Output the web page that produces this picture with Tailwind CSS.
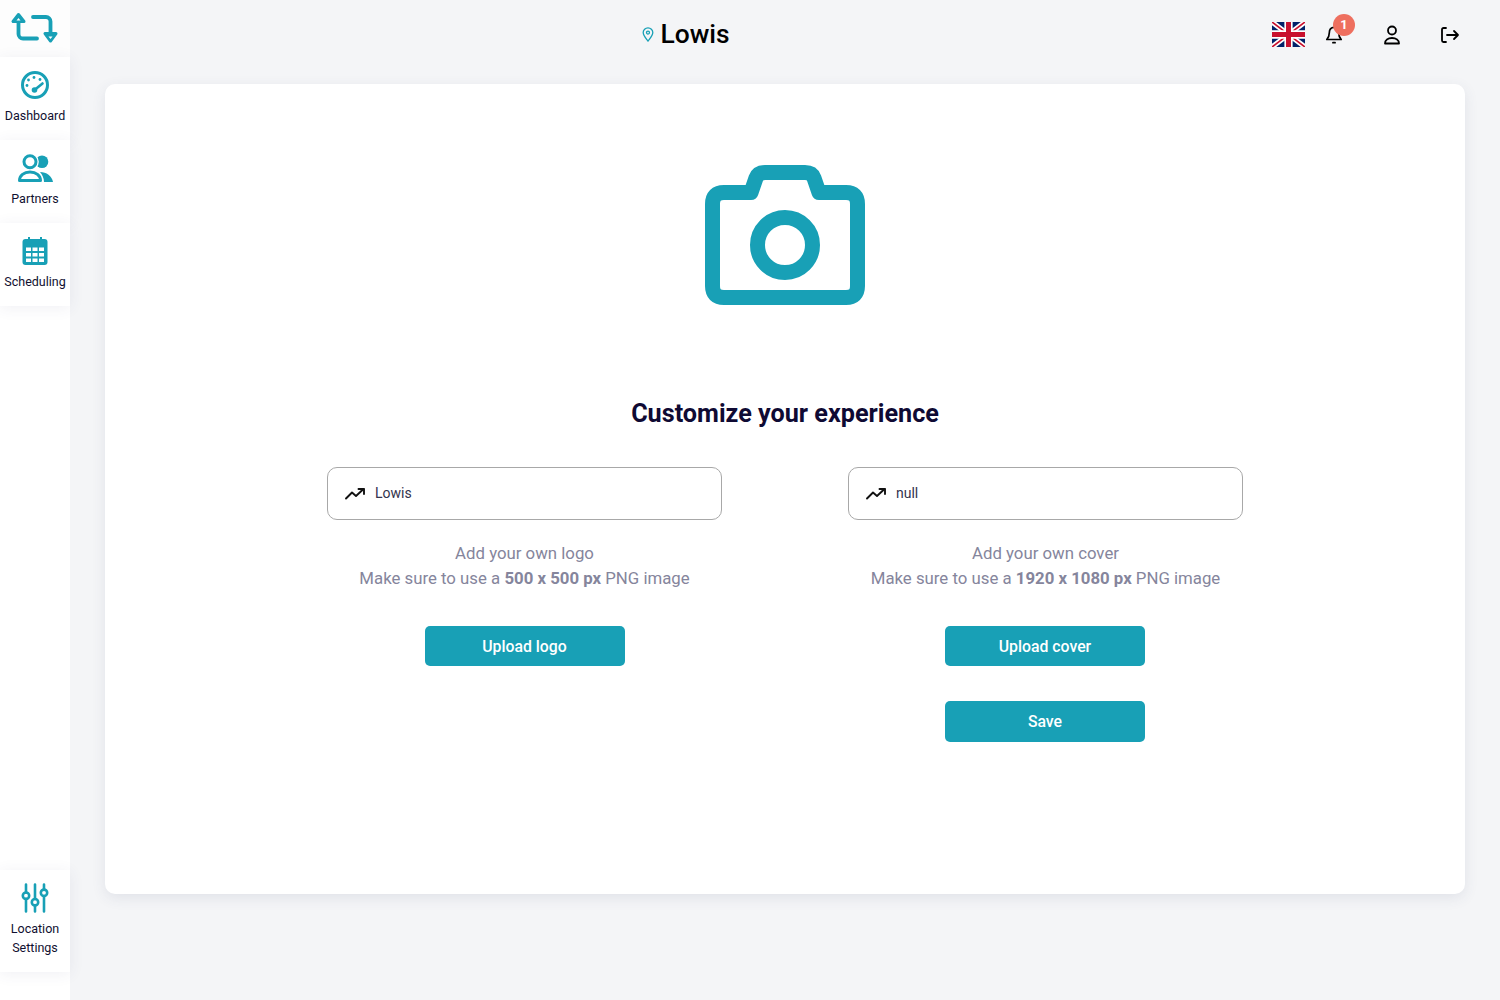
<!DOCTYPE html>
<html lang="en">
<head>
  <meta charset="UTF-8">
  <title>Lowis - Customize</title>
  <script src="https://cdn.jsdelivr.net/npm/@tailwindcss/browser@4"></script>
</head>
<body class="bg-[#f4f5f7] font-['Roboto',sans-serif] text-black">
  <div class="flex h-[1000px] w-[1500px] overflow-hidden">
    <!-- Sidebar -->
    <aside class="z-10 flex w-[70px] shrink-0 flex-col bg-white">
      <div class="flex h-[57px] items-start bg-[#fdfdfd] pt-[12px] pl-[10px]">
        <svg class="h-[32px] w-[48px]" viewBox="0 0 48 32" fill="none" stroke="#18a0b6" stroke-width="3.8" stroke-linecap="round" stroke-linejoin="round">
          <path d="M8.5 10v12a4.5 4.5 0 0 0 4.5 4.5h14"/>
          <path d="M8.5 2.5 3 9.500h11z" fill="#18a0b6" stroke-width="3"/>
          <path d="M8.500 6 6.500 8.500h4z" fill="#fff" stroke="none"/>
          <path d="M23 5h13a4.500 4.500 0 0 1 4.500 4.500V21"/>
          <path d="M35 21.500h11l-5.500 7.500z" fill="#18a0b6" stroke-width="3"/>
          <path d="M38.500 24.500h4l-2 2.500z" fill="#fff" stroke="none"/>
        </svg>
      </div>

      <a class="flex h-[83px] flex-col items-center bg-white pt-[13px] shadow-[0_2px_14px_rgba(60,70,110,0.08)]">
        <svg class="h-[30px] w-[30px]" viewBox="0 0 30 30" fill="none" stroke="#18a0b6">
          <circle cx="15" cy="15" r="12.5" stroke-width="3"/>
          <path d="M14.5 20 22.5 13.5" stroke-width="2.6" stroke-linecap="round"/>
          <circle cx="14.5" cy="20" r="2.8" fill="#18a0b6" stroke="none"/>
          <g fill="#18a0b6" stroke="none">
            <circle cx="7" cy="15.5" r="1.4"/><circle cx="8.5" cy="10" r="1.4"/><circle cx="14" cy="7.5" r="1.4"/><circle cx="20" cy="9.5" r="1.4"/>
          </g>
        </svg>
        <span class="mt-[8px] text-[12.5px] leading-[16px] text-[#101030]">Dashboard</span>
      </a>

      <a class="flex h-[83px] flex-col items-center bg-white pt-[13px] shadow-[0_2px_14px_rgba(60,70,110,0.08)]">
        <svg class="h-[30px] w-[36px]" viewBox="0 0 36 30" fill="none" stroke="#18a0b6" stroke-width="3">
          <circle cx="25" cy="8.7" r="6.3" fill="#18a0b6" stroke="none"/>
          <circle cx="13" cy="8.7" r="8.8" fill="#fff" stroke="none"/>
          <circle cx="13" cy="8.7" r="6"/>
          <path d="M23 19c6.5 0 12 4 13 10H27c0-4-1.5-7-4-10z" fill="#18a0b6" stroke="none"/>
          <path d="M2.5 27.5c0-5 4.5-8.5 10.500-8.500s10.500 3.500 10.500 8.500z" fill="#fff" stroke-linejoin="round"/>
        </svg>
        <span class="mt-[8px] text-[12.5px] leading-[16px] text-[#101030]">Partners</span>
      </a>

      <a class="flex h-[83px] flex-col items-center bg-white pt-[13px] shadow-[0_2px_14px_rgba(60,70,110,0.08)]">
        <svg class="h-[30px] w-[30px]" viewBox="0 0 30 30">
          <path d="M8 1h2v4H8zM20 1h2v4h-2z" fill="#18a0b6"/>
          <rect x="2.5" y="3" width="25" height="26" rx="3" fill="#18a0b6"/>
          <g fill="#fff">
            <rect x="6" y="11.5" width="5" height="3.5"/><rect x="12.5" y="11.5" width="5" height="3.5"/><rect x="19" y="11.5" width="5" height="3.5"/>
            <rect x="6" y="17" width="5" height="3.5"/><rect x="12.5" y="17" width="5" height="3.5"/><rect x="19" y="17" width="5" height="3.5"/>
            <rect x="6" y="22.5" width="5" height="3.5"/><rect x="12.5" y="22.5" width="5" height="3.5"/><rect x="19" y="22.5" width="5" height="3.5"/>
          </g>
        </svg>
        <span class="mt-[8px] text-[12.5px] leading-[16px] text-[#101030]">Scheduling</span>
      </a>

      <a class="mt-auto mb-[28px] flex h-[102px] flex-col items-center bg-white pt-[13px] shadow-[0_2px_14px_rgba(60,70,110,0.08)]">
        <svg class="h-[30px] w-[30px]" viewBox="0 0 30 30" fill="none" stroke="#18a0b6" stroke-width="2.6" stroke-linecap="round">
          <path d="M6 1.5v8M6 16v12.500M15 1.500v14.500M15 22.500v6M24 1.500v5M24 13v15.500"/>
          <circle cx="6" cy="12.7" r="3.2"/><circle cx="15" cy="19.2" r="3.2"/><circle cx="24" cy="9.8" r="3.2"/>
        </svg>
        <span class="mt-[6px] text-center text-[12.5px] leading-[19px] text-[#101030]">Location<br>Settings</span>
      </a>
    </aside>

    <!-- Main -->
    <main class="flex min-w-0 flex-1 flex-col">
      <header class="relative flex h-[84px] shrink-0 items-start">
        <div class="flex w-[1430px] justify-center pt-[17px] pr-[198px]">
          <div class="flex items-center">
            <svg class="mt-[1px] mr-[6px] h-[15px] w-[12px]" viewBox="0 0 12 15" fill="none" stroke="#18a0b6" stroke-width="1.3">
              <path d="M6 14C3.5 10.8 1.2 8.5 1.2 5.6a4.8 4.8 0 0 1 9.6 0C10.8 8.5 8.5 10.8 6 14z"/>
              <circle cx="6" cy="5.6" r="1.5"/>
            </svg>
            <h1 class="text-[26.4px] leading-[34px] font-medium">Lowis</h1>
          </div>
        </div>
        <div class="absolute top-[14px] right-[39px] flex items-start">
          <svg class="mt-[8px] h-[25px] w-[33px]" viewBox="0 0 60 44" preserveAspectRatio="none">
            <rect width="60" height="44" fill="#012169"/>
            <path d="M0 0 60 44M60 0 0 44" stroke="#fff" stroke-width="9"/>
            <path d="M0 0 60 44M60 0 0 44" stroke="#c8102e" stroke-width="3"/>
            <path d="M30 0v44M0 22h60" stroke="#fff" stroke-width="15"/>
            <path d="M30 0v44M0 22h60" stroke="#c8102e" stroke-width="9"/>
          </svg>
          <div class="relative ml-[14px] h-[36px] w-[24px]">
            <svg class="absolute top-[11px] left-[6px] h-[20px] w-[18px]" viewBox="0 0 20 22" fill="none" stroke="#000" stroke-width="1.9" stroke-linecap="round" stroke-linejoin="round">
              <path d="M10 2.5c-3.500 0-5.200 2.500-5.200 6 0 4-1 5.500-2.800 7.500h16c-1.800-2-2.800-3.500-2.800-7.500 0-3.500-1.700-6-5.200-6z"/>
              <path d="M8.800 19.500h2.400"/>
            </svg>
            <span class="absolute top-0 left-[14px] flex h-[22px] w-[22px] items-center justify-center rounded-full bg-[#ee6f5f] text-[13px] font-bold text-white">1</span>
          </div>
          <svg class="mt-[10px] ml-[39px] h-[22px] w-[20px]" viewBox="0 0 20 22" fill="none" stroke="#000" stroke-width="1.800" stroke-linecap="round" stroke-linejoin="round">
            <circle cx="10" cy="6.500" r="4"/>
            <path d="M3 19.500c0-3.500 3-5.500 7-5.500s7 2 7 5.500z"/>
          </svg>
          <svg class="mt-[10px] ml-[37px] h-[22px] w-[22px]" viewBox="0 0 22 22" fill="none" stroke="#000" stroke-width="1.800" stroke-linecap="round" stroke-linejoin="round">
            <path d="M7 4H4.500A1.500 1.500 0 0 0 3 5.500v11A1.500 1.500 0 0 0 4.500 18H7"/>
            <path d="M8 11h11M15 7l4 4-4 4"/>
          </svg>
        </div>
      </header>

      <!-- Card -->
      <section class="ml-[35px] flex h-[810px] w-[1360px] flex-col items-center rounded-[10px] bg-white pt-[81px] shadow-[0_4px_14px_rgba(60,70,110,0.1)]">
        <svg class="h-[140px] w-[160px]" viewBox="0 0 160 140" fill="none" stroke="#18a0b6" stroke-width="15" stroke-linejoin="round">
          <path d="M19 27.500H46L51 13Q53 7.500 60 7.500H100Q107 7.500 109 13L114 27.500H141Q152.500 27.500 152.500 39V121Q152.500 132.500 141 132.500H19Q7.500 132.500 7.500 121V39Q7.500 27.500 19 27.500Z"/>
          <circle cx="80" cy="80" r="27.5"/>
        </svg>

        <h2 class="mt-[93px] mb-[-1px] text-[25.2px] leading-[32px] font-bold text-[#0f0a33]">Customize your experience</h2>

        <div class="mt-[38px] flex w-[916px] justify-between">
          <!-- Logo column -->
          <div class="flex w-[395px] flex-col items-center">
            <div class="flex h-[53px] w-full items-center rounded-[10px] border border-[#a8a8a8] pl-[17px]">
              <svg class="h-[12px] w-[20px]" viewBox="0 0 20 12" fill="none" stroke="#111" stroke-width="1.9" stroke-linecap="round" stroke-linejoin="round">
                <path d="M1 10.500 7 4.500l4 3.500 7.500-7"/>
                <path d="M13.500 1h5.500v5"/>
              </svg>
              <span class="ml-[10px] text-[14px] text-[#33334d]">Lowis</span>
            </div>
            <p class="mt-[21px] text-center text-[16.8px] leading-[25px] text-[#85859c]">Add your own logo<br>Make sure to use a <b class="font-bold">500 x 500 px</b> PNG image</p>
            <button class="mt-[35px] h-[40px] w-[200px] rounded-[5px] bg-[#18a0b6] pt-[1px] text-[15.8px] font-medium text-white">Upload logo</button>
          </div>
          <!-- Cover column -->
          <div class="flex w-[395px] flex-col items-center">
            <div class="flex h-[53px] w-full items-center rounded-[10px] border border-[#a8a8a8] pl-[17px]">
              <svg class="h-[12px] w-[20px]" viewBox="0 0 20 12" fill="none" stroke="#111" stroke-width="1.9" stroke-linecap="round" stroke-linejoin="round">
                <path d="M1 10.500 7 4.500l4 3.500 7.500-7"/>
                <path d="M13.500 1h5.500v5"/>
              </svg>
              <span class="ml-[10px] text-[14px] text-[#33334d]">null</span>
            </div>
            <p class="mt-[21px] text-center text-[16.8px] leading-[25px] text-[#85859c]">Add your own cover<br>Make sure to use a <b class="font-bold">1920 x 1080 px</b> PNG image</p>
            <button class="mt-[35px] mr-[1px] h-[40px] w-[200px] rounded-[5px] bg-[#18a0b6] pt-[1px] text-[15.8px] font-medium text-white">Upload cover</button>
            <button class="mt-[35px] mr-[1px] h-[41px] w-[200px] rounded-[5px] bg-[#18a0b6] text-[15.8px] font-medium text-white">Save</button>
          </div>
        </div>
      </section>
    </main>
  </div>
</body>
</html>
